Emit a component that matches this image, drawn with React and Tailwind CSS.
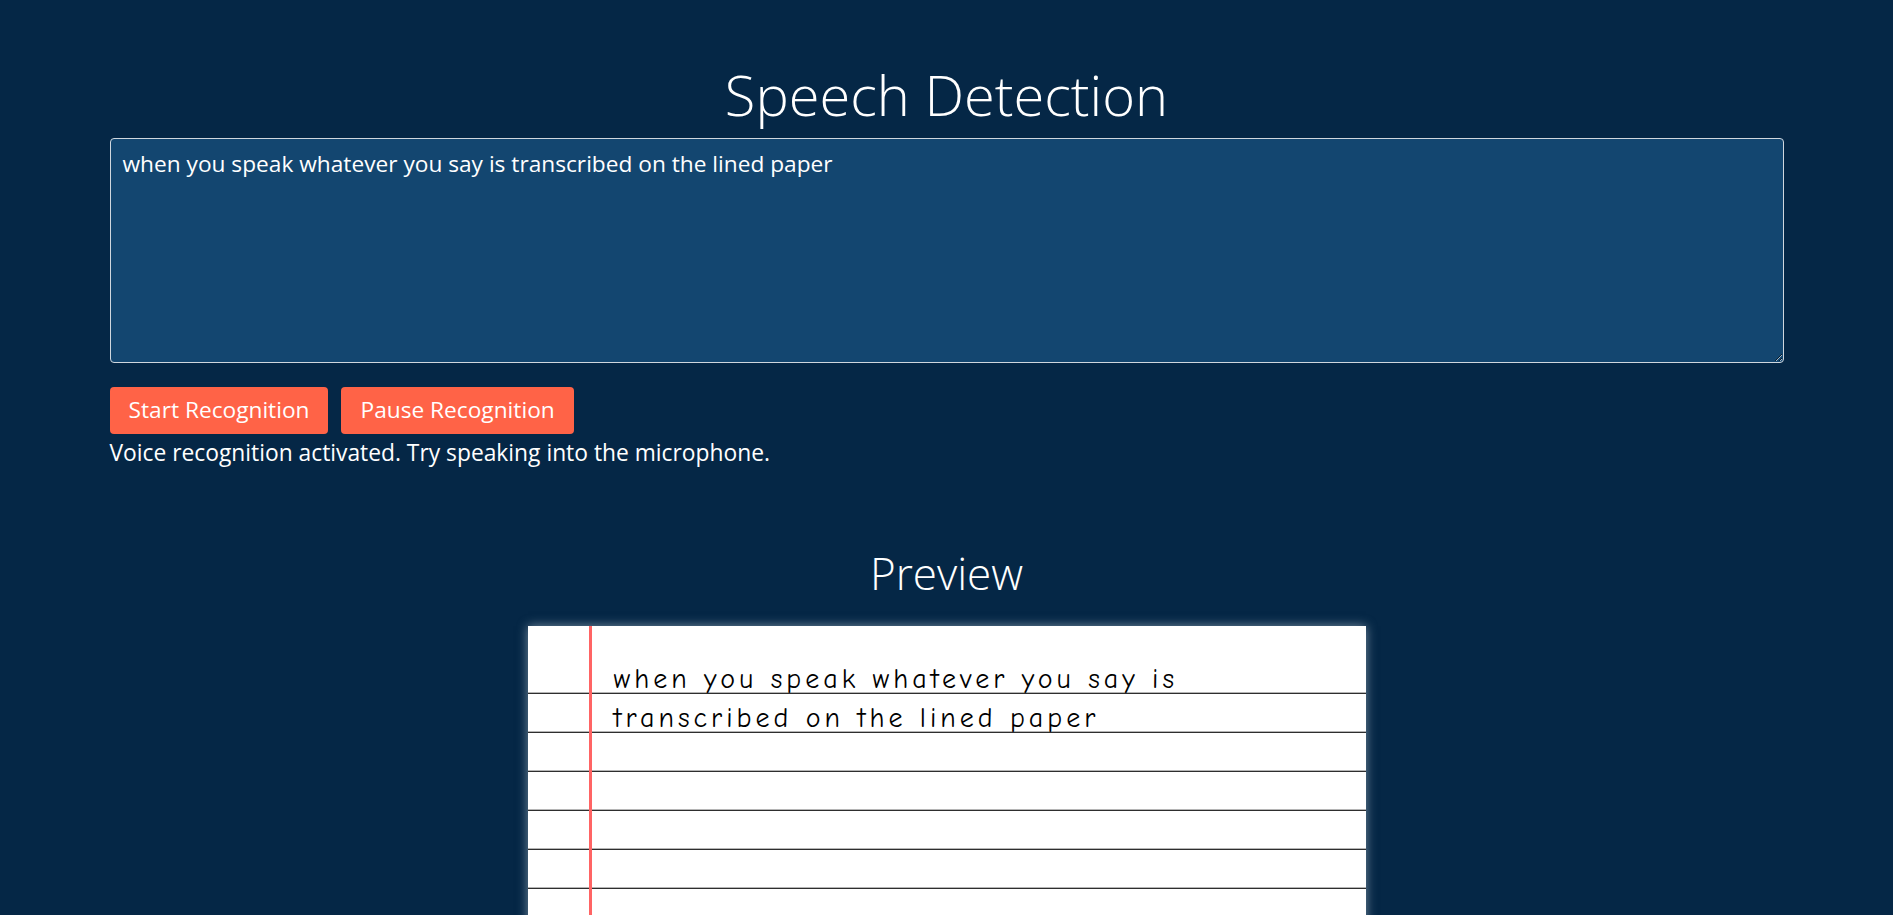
import { useState } from "react";

const SAMPLE = "when you speak whatever you say is transcribed on the lined paper";

export default function App() {
  const [transcript, setTranscript] = useState(SAMPLE);

  return (
    <div className="min-h-screen bg-[#052746] text-white font-['Open_Sans','Noto_Sans',sans-serif]">
      <div className="mx-auto w-[1674px] pt-[58px]">
        <h1 className="text-center text-[56px] font-light leading-[72px]">
          Speech Detection
        </h1>

        <textarea
          value={transcript}
          onChange={(e) => setTranscript(e.target.value)}
          className="
            mt-[8px] block w-full h-[225px]
            rounded-[4px] border border-[#d0d7de]
            bg-[#134670]
            px-[12px] py-[8px]
            text-[22.7px] leading-[33px] text-white
            outline-none
          "
        />

        <div className="mt-[24px] flex gap-[13px]">
          <button className="h-[47px] rounded-[4px] bg-[#ff6347] px-[19px] text-[22.7px] text-white">
            Start Recognition
          </button>
          <button className="h-[47px] rounded-[4px] bg-[#ff6347] px-[19px] text-[22.7px] text-white">
            Pause Recognition
          </button>
        </div>

        <p className="mt-[4px] text-[22.8px] leading-[30px]">
          Voice recognition activated. Try speaking into the microphone.
        </p>

        <h2 className="mt-[77px] text-center text-[44px] font-light leading-[56px]">
          Preview
        </h2>
      </div>

      {/* LINED PAPER */}
      <div
        className="
          relative mx-auto mt-[25px] w-[838px]
          bg-white
          shadow-[0_0_10px_rgba(210,220,230,0.55)]
        "
      >
        <div className="absolute left-[61px] top-0 bottom-0 w-[3px] bg-[#ff6464]" />

        <div className="h-[34px]" />

        <div
          className="
            min-h-[780px]
            bg-[linear-gradient(to_bottom,transparent_37px,#b5b5b5_37px,#b5b5b5_38px,#2e2e2e_38px,#2e2e2e_39px)]
            bg-[length:100%_39px] bg-[position:0_-5px]
            pl-[86px] pr-[100px]
            text-[28px] leading-[39px] tracking-[4px] text-black
            font-['Comic_Sans_MS','Comic_Neue','DejaVu_Sans',sans-serif]
          "
        >
          {transcript}
        </div>
      </div>
    </div>
  );
}
